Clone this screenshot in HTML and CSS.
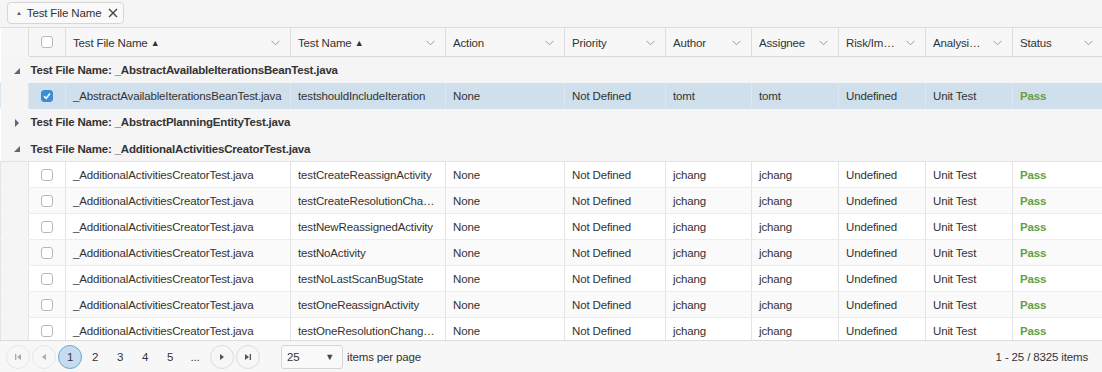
FILE: index.html
```html
<!DOCTYPE html>
<html lang="en">
<head>
  <meta charset="UTF-8">
  <title>Test Results Grid</title>
  <link rel="stylesheet" href="styles.css">
</head>
<body>
  <div class="grid" id="test_grid">
    <div class="grid__groups">
      <span class="group-chip">
        <span class="group-chip__sort">&#9650;</span>
        <span class="group-chip__text">Test File Name</span>
        <svg class="group-chip__close" width="10" height="10" viewBox="0 0 10 10"><path d="M1 1 L9 9 M9 1 L1 9" stroke="#444" stroke-width="1.4"/></svg>
      </span>
    </div>

    <div class="grid__body">
      <table class="grid-table">
        <colgroup>
          <col style="width:28px">
          <col style="width:37px">
          <col style="width:225px">
          <col style="width:155px">
          <col style="width:119px">
          <col style="width:101px">
          <col style="width:86px">
          <col style="width:87px">
          <col style="width:87px">
          <col style="width:87px">
          <col style="width:90px">
        </colgroup>
        <thead>
          <tr>
            <th class="cell-indent"></th>
            <th class="cell-check"><span class="checkbox"></span></th>
            <th><div class="th-inner"><span>Test File Name <i class="sort">&#9650;</i></span><svg class="menu" width="9" height="6" viewBox="0 0 9 6"><path d="M0.5 0.8 L4.5 4.8 L8.5 0.8" fill="none" stroke="#9a9a9a"/></svg></div></th>
            <th><div class="th-inner"><span>Test Name <i class="sort">&#9650;</i></span><svg class="menu" width="9" height="6" viewBox="0 0 9 6"><path d="M0.5 0.8 L4.5 4.8 L8.5 0.8" fill="none" stroke="#9a9a9a"/></svg></div></th>
            <th><div class="th-inner"><span>Action</span><svg class="menu" width="9" height="6" viewBox="0 0 9 6"><path d="M0.5 0.8 L4.5 4.8 L8.5 0.8" fill="none" stroke="#9a9a9a"/></svg></div></th>
            <th><div class="th-inner"><span>Priority</span><svg class="menu" width="9" height="6" viewBox="0 0 9 6"><path d="M0.5 0.8 L4.5 4.8 L8.5 0.8" fill="none" stroke="#9a9a9a"/></svg></div></th>
            <th><div class="th-inner"><span>Author</span><svg class="menu" width="9" height="6" viewBox="0 0 9 6"><path d="M0.5 0.8 L4.5 4.8 L8.5 0.8" fill="none" stroke="#9a9a9a"/></svg></div></th>
            <th><div class="th-inner"><span>Assignee</span><svg class="menu" width="9" height="6" viewBox="0 0 9 6"><path d="M0.5 0.8 L4.5 4.8 L8.5 0.8" fill="none" stroke="#9a9a9a"/></svg></div></th>
            <th><div class="th-inner"><span>Risk/Im…</span><svg class="menu" width="9" height="6" viewBox="0 0 9 6"><path d="M0.5 0.8 L4.5 4.8 L8.5 0.8" fill="none" stroke="#9a9a9a"/></svg></div></th>
            <th><div class="th-inner"><span>Analysi…</span><svg class="menu" width="9" height="6" viewBox="0 0 9 6"><path d="M0.5 0.8 L4.5 4.8 L8.5 0.8" fill="none" stroke="#9a9a9a"/></svg></div></th>
            <th><div class="th-inner"><span>Status</span><svg class="menu" width="9" height="6" viewBox="0 0 9 6"><path d="M0.5 0.8 L4.5 4.8 L8.5 0.8" fill="none" stroke="#9a9a9a"/></svg></div></th>
          </tr>
        </thead>
        <tbody>
          <tr class="group-row">
            <td colspan="11"><span class="toggle toggle--open"></span>Test File Name: _AbstractAvailableIterationsBeanTest.java</td>
          </tr>
          <tr class="row row--selected">
            <td class="cell-indent"></td>
            <td class="cell-check"><span class="checkbox checkbox--checked"><svg width="10" height="10" viewBox="0 0 10 10"><path d="M2 5.2 L4.2 7.4 L8 2.6" fill="none" stroke="#fff" stroke-width="1.6"/></svg></span></td>
            <td>_AbstractAvailableIterationsBeanTest.java</td>
            <td>testshouldIncludeIteration</td>
            <td>None</td>
            <td>Not Defined</td>
            <td>tomt</td>
            <td>tomt</td>
            <td>Undefined</td>
            <td>Unit Test</td>
            <td class="status-pass">Pass</td>
          </tr>
          <tr class="group-row">
            <td colspan="11"><span class="toggle toggle--closed"></span>Test File Name: _AbstractPlanningEntityTest.java</td>
          </tr>
          <tr class="group-row group-row--last">
            <td colspan="11"><span class="toggle toggle--open"></span>Test File Name: _AdditionalActivitiesCreatorTest.java</td>
          </tr>
          <tr class="row">
            <td class="cell-indent"></td>
            <td class="cell-check"><span class="checkbox"></span></td>
            <td>_AdditionalActivitiesCreatorTest.java</td>
            <td>testCreateReassignActivity</td>
            <td>None</td><td>Not Defined</td><td>jchang</td><td>jchang</td><td>Undefined</td><td>Unit Test</td>
            <td class="status-pass">Pass</td>
          </tr>
          <tr class="row row--alt">
            <td class="cell-indent"></td>
            <td class="cell-check"><span class="checkbox"></span></td>
            <td>_AdditionalActivitiesCreatorTest.java</td>
            <td>testCreateResolutionChangeActivity</td>
            <td>None</td><td>Not Defined</td><td>jchang</td><td>jchang</td><td>Undefined</td><td>Unit Test</td>
            <td class="status-pass">Pass</td>
          </tr>
          <tr class="row">
            <td class="cell-indent"></td>
            <td class="cell-check"><span class="checkbox"></span></td>
            <td>_AdditionalActivitiesCreatorTest.java</td>
            <td>testNewReassignedActivity</td>
            <td>None</td><td>Not Defined</td><td>jchang</td><td>jchang</td><td>Undefined</td><td>Unit Test</td>
            <td class="status-pass">Pass</td>
          </tr>
          <tr class="row row--alt">
            <td class="cell-indent"></td>
            <td class="cell-check"><span class="checkbox"></span></td>
            <td>_AdditionalActivitiesCreatorTest.java</td>
            <td>testNoActivity</td>
            <td>None</td><td>Not Defined</td><td>jchang</td><td>jchang</td><td>Undefined</td><td>Unit Test</td>
            <td class="status-pass">Pass</td>
          </tr>
          <tr class="row">
            <td class="cell-indent"></td>
            <td class="cell-check"><span class="checkbox"></span></td>
            <td>_AdditionalActivitiesCreatorTest.java</td>
            <td>testNoLastScanBugState</td>
            <td>None</td><td>Not Defined</td><td>jchang</td><td>jchang</td><td>Undefined</td><td>Unit Test</td>
            <td class="status-pass">Pass</td>
          </tr>
          <tr class="row row--alt">
            <td class="cell-indent"></td>
            <td class="cell-check"><span class="checkbox"></span></td>
            <td>_AdditionalActivitiesCreatorTest.java</td>
            <td>testOneReassignActivity</td>
            <td>None</td><td>Not Defined</td><td>jchang</td><td>jchang</td><td>Undefined</td><td>Unit Test</td>
            <td class="status-pass">Pass</td>
          </tr>
          <tr class="row">
            <td class="cell-indent"></td>
            <td class="cell-check"><span class="checkbox"></span></td>
            <td>_AdditionalActivitiesCreatorTest.java</td>
            <td>testOneResolutionChangeActivity</td>
            <td>None</td><td>Not Defined</td><td>jchang</td><td>jchang</td><td>Undefined</td><td>Unit Test</td>
            <td class="status-pass">Pass</td>
          </tr>
        </tbody>
      </table>
    </div>

    <div class="pager">
      <div class="pager__nav">
        <span class="pager__btn pager__btn--disabled"><svg width="10" height="10" viewBox="0 0 10 10"><rect x="2" y="2" width="1.3" height="6" fill="#aaa"/><path d="M8 2 L4 5 L8 8 Z" fill="#aaa"/></svg></span>
        <span class="pager__btn pager__btn--disabled"><svg width="10" height="10" viewBox="0 0 10 10"><path d="M7 2 L3 5 L7 8 Z" fill="#aaa"/></svg></span>
        <span class="pager__page pager__page--current">1</span>
        <span class="pager__page">2</span>
        <span class="pager__page">3</span>
        <span class="pager__page">4</span>
        <span class="pager__page">5</span>
        <span class="pager__page pager__page--more">...</span>
        <span class="pager__btn"><svg width="10" height="10" viewBox="0 0 10 10"><path d="M3 2 L7 5 L3 8 Z" fill="#555"/></svg></span>
        <span class="pager__btn"><svg width="10" height="10" viewBox="0 0 10 10"><path d="M2 2 L6 5 L2 8 Z" fill="#555"/><rect x="6.7" y="2" width="1.3" height="6" fill="#555"/></svg></span>
      </div>
      <div class="pager__size">
        <span class="pager__select"><span>25</span><span class="pager__caret">&#9660;</span></span>
        <span class="pager__label">items per page</span>
      </div>
      <div class="pager__info">1 - 25 / 8325 items</div>
    </div>
  </div>
</body>
</html>
```

FILE: styles.css
```css
/* General styles */
html, body {
  margin: 0;
  padding: 0;
  background: #fff;
}

#test_grid {
  width: 1102px;
  height: 372px;
  font-family: "Liberation Sans", Arial, sans-serif;
  font-size: 11.5px;
  letter-spacing: -0.15px;
  color: #333;
  display: flex;
  flex-direction: column;
  overflow: hidden;
}

/* Group drop area */
#test_grid .grid__groups {
  height: 28px;
  box-sizing: border-box;
  background: #f5f5f5;
  border-bottom: 1px solid #dcdcdc;
  display: flex;
  align-items: center;
  padding-left: 7px;
}

#test_grid .group-chip {
  display: flex;
  align-items: center;
  height: 22px;
  box-sizing: border-box;
  margin-top: -1px;
  padding: 0 5px 0 8px;
  border: 1px solid #d6d6d6;
  border-radius: 4px;
  background: #f9f9f9;
}

#test_grid .group-chip__sort {
  font-size: 6px;
  color: #555;
  margin-right: 5px;
}

#test_grid .group-chip__text {
  margin-right: 7px;
}

/* Table */
#test_grid .grid__body {
  height: 312px;
  overflow: hidden;
}

#test_grid .grid-table {
  width: 1102px;
  table-layout: fixed;
  border-collapse: collapse;
  border-spacing: 0;
}

#test_grid .grid-table th,
#test_grid .grid-table td {
  padding: 0 7px;
  white-space: nowrap;
  overflow: hidden;
  text-overflow: ellipsis;
  text-align: left;
}

#test_grid .grid-table th {
  height: 28px;
  font-weight: normal;
  background: #f7f7f7;
  border-left: 1px solid #dedede;
  border-bottom: 1px solid #d8d8d8;
}

#test_grid .grid-table th:first-child {
  border-left: 0;
}

#test_grid .th-inner {
  display: flex;
  align-items: center;
  justify-content: space-between;
  overflow: hidden;
  padding-top: 1px;
}

#test_grid .th-inner span {
  overflow: hidden;
  text-overflow: ellipsis;
}

#test_grid .th-inner .menu {
  flex: 0 0 auto;
  margin-right: 3px;
}

#test_grid .sort {
  font-style: normal;
  font-size: 9px;
  vertical-align: 1px;
}

#test_grid .grid-table td {
  height: 24px;
  padding-top: 1px;
  border-left: 1px solid #e4e4e4;
  border-bottom: 1px solid #ececec;
}

#test_grid .cell-indent {
  background: #f5f5f5;
  border-bottom-color: #f5f5f5 !important;
}

#test_grid .cell-check {
  padding: 0 !important;
  text-align: center !important;
}

#test_grid .checkbox {
  display: inline-flex;
  align-items: center;
  justify-content: center;
  width: 12px;
  height: 12px;
  box-sizing: border-box;
  border: 1px solid #b8b8b8;
  border-radius: 3px;
  background: #fff;
  vertical-align: middle;
}

#test_grid .checkbox--checked {
  background: #3c8dd6;
  border-color: #3c8dd6;
}

#test_grid .row--alt td {
  background: #fafafa;
}

#test_grid .row--selected td {
  background: #cfdfeb;
  border-bottom-color: #cfdfeb;
  border-left-color: #dbe6ee;
}

#test_grid .row td.cell-indent {
  background: #f5f5f5;
}

#test_grid .group-row td {
  height: 24px;
  padding-left: 12px;
  font-weight: bold;
  letter-spacing: -0.2px;
  background: #f5f5f5;
  border-left: 0;
  border-bottom: 1px solid #f5f5f5;
}

#test_grid .group-row--last td {
  height: 25px;
  border-bottom-color: #e4e4e4;
}

#test_grid .toggle {
  display: inline-block;
  width: 18px;
  vertical-align: middle;
  position: relative;
  height: 10px;
}

#test_grid .toggle--open::before {
  content: "";
  position: absolute;
  left: 1px;
  top: 2px;
  border-style: solid;
  border-width: 0 0 6px 6px;
  border-color: transparent transparent #666 transparent;
}

#test_grid .toggle--closed::before {
  content: "";
  position: absolute;
  left: 2px;
  top: 1px;
  border-style: solid;
  border-width: 4px 0 4px 4px;
  border-color: transparent transparent transparent #666;
}

#test_grid .status-pass {
  color: #61a13f;
  font-weight: bold;
}

/* Pager */
#test_grid .pager {
  height: 32px;
  box-sizing: border-box;
  border-top: 1px solid #dcdcdc;
  background: #f7f7f7;
  display: flex;
  align-items: center;
  padding: 0 14px 0 6px;
}

#test_grid .pager__nav {
  display: flex;
  align-items: center;
}

#test_grid .pager__btn,
#test_grid .pager__page {
  display: flex;
  align-items: center;
  justify-content: center;
  width: 24px;
  height: 24px;
  box-sizing: border-box;
  border-radius: 50%;
}

#test_grid .pager__btn {
  margin-right: 2px;
  border: 1px solid #dcdcdc;
  background: #f7f7f7;
}

#test_grid .pager__page {
  margin-right: 1px;
}

#test_grid .pager__page--more {
  margin-right: 3px;
}

#test_grid .pager__btn--disabled {
  border-color: #e6e6e6;
}

#test_grid .pager__page--current {
  background: #c5dcee;
  border: 1px solid #6ea6d6;
}

#test_grid .pager__size {
  display: flex;
  align-items: center;
  margin-left: 19px;
}

#test_grid .pager__select {
  display: flex;
  align-items: center;
  justify-content: space-between;
  width: 62px;
  height: 24px;
  box-sizing: border-box;
  padding: 0 8px 0 5px;
  border: 1px solid #d6d6d6;
  border-radius: 3px;
  background: #f9f9f9;
}

#test_grid .pager__caret {
  font-size: 9px;
  color: #444;
}

#test_grid .pager__label {
  margin-left: 4px;
}

#test_grid .pager__info {
  margin-left: auto;
}
```
